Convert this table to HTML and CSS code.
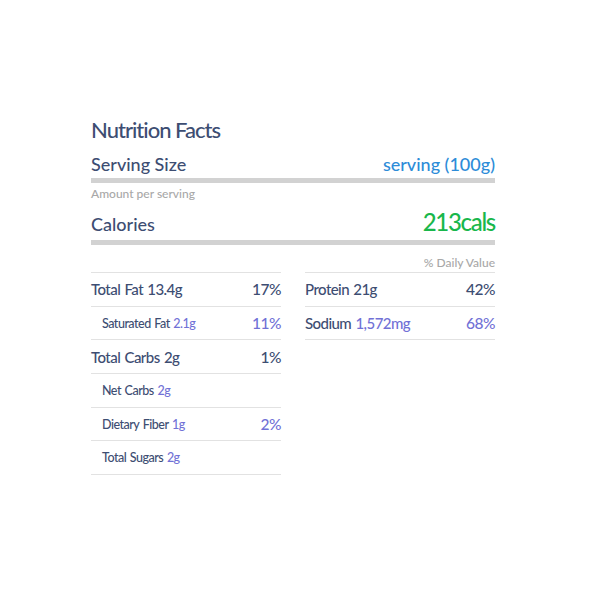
FILE: index.html
```html
<!DOCTYPE html>
<html>
<head>
<meta charset="utf-8">
<link rel="stylesheet" href="styles.css">
</head>
<body>
<div class="panel">
  <h1 class="title">Nutrition Facts</h1>
  <div class="serving">
    <span class="serving-label">Serving Size</span>
    <span class="serving-value">serving (100g)</span>
  </div>
  <div class="bar"></div>
  <div class="amount">Amount per serving</div>
  <div class="calories">
    <span class="cal-label">Calories</span>
    <span class="cal-value">213cals</span>
  </div>
  <div class="bar bar-cal"></div>
  <div class="dv">% Daily Value</div>
  <div class="cols">
    <div class="col">
      <div class="row"><span class="name">Total Fat 13.4g</span><span class="pct">17%</span></div>
      <div class="row sub"><span class="name">Saturated Fat <span class="amt">2.1g</span></span><span class="pct purple">11%</span></div>
      <div class="row"><span class="name">Total Carbs 2g</span><span class="pct">1%</span></div>
      <div class="row sub"><span class="name">Net Carbs <span class="amt">2g</span></span></div>
      <div class="row sub"><span class="name">Dietary Fiber <span class="amt">1g</span></span><span class="pct purple">2%</span></div>
      <div class="row sub"><span class="name">Total Sugars <span class="amt">2g</span></span></div>
    </div>
    <div class="col">
      <div class="row"><span class="name">Protein 21g</span><span class="pct">42%</span></div>
      <div class="row"><span class="name">Sodium <span class="amt">1,572mg</span></span><span class="pct purple">68%</span></div>
    </div>
  </div>
</div>
</body>
</html>
```

FILE: styles.css
```css
html, body {
  margin: 0;
  padding: 0;
  background: #ffffff;
}
body {
  font-family: Lato, "Open Sans", sans-serif;
  font-weight: 500;
  color: #3d4d72;
}
.panel {
  width: 404px;
  margin-left: 91px;
  padding-top: 117px;
}
.title {
  margin: 0;
  font-size: 22px;
  line-height: 26px;
  font-weight: 500;
  letter-spacing: -1px;
  color: #3d4d72;
}
.serving {
  margin-top: 10px;
  display: flex;
  justify-content: space-between;
  align-items: baseline;
  font-size: 18px;
  line-height: 22px;
}
.serving-value {
  color: #2d8cd8;
}
.bar {
  height: 5px;
  background: #d2d2d2;
  margin-top: 3px;
}
.bar-cal {
  margin-top: 2px;
}
.amount {
  margin-top: 3px;
  font-size: 12px;
  line-height: 16px;
  color: #a8a8a8;
}
.calories {
  margin-top: 6px;
  display: flex;
  justify-content: space-between;
  align-items: baseline;
  line-height: 28px;
}
.cal-label {
  font-size: 18px;
}
.cal-value {
  font-size: 24px;
  letter-spacing: -1.3px;
  color: #19b74b;
}
.dv {
  margin-top: 10px;
  text-align: right;
  font-size: 12px;
  line-height: 16px;
  color: #a8a8a8;
  margin-bottom: 1px;
}
.cols {
  display: grid;
  grid-template-columns: 190px 190px;
  column-gap: 24px;
  align-items: start;
}
.col {
  border-bottom: 1px solid #e2e2e2;
}
.row {
  box-sizing: border-box;
  height: 33.7px;
  border-top: 1px solid #e2e2e2;
  display: flex;
  justify-content: space-between;
  align-items: center;
  font-size: 15px;
  letter-spacing: -0.55px;
  word-spacing: 1px;
}
.row.sub {
  padding-left: 11px;
}
.row.sub .name {
  font-size: 12.5px;
  letter-spacing: -0.5px;
  word-spacing: 1px;
}
.amt {
  color: #7171d6;
}
.pct {
  font-size: 15.5px;
  letter-spacing: -0.5px;
}
.purple {
  color: #7171d6;
}
```
